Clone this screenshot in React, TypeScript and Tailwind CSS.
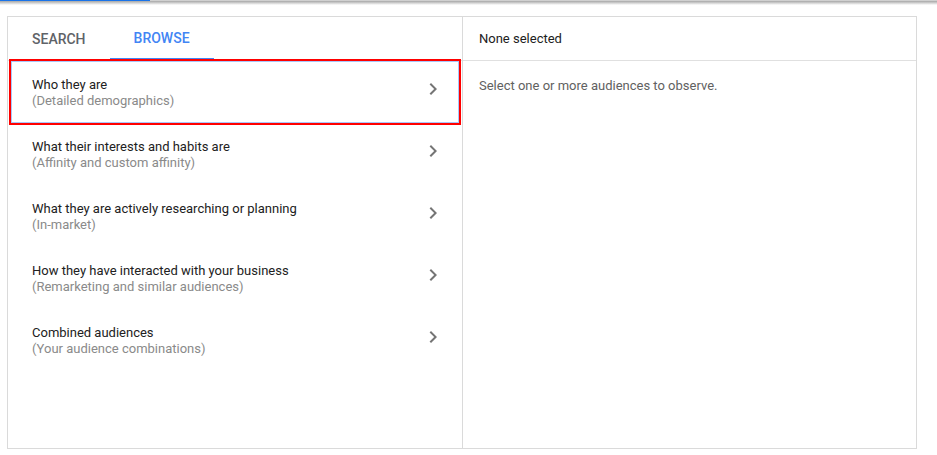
const categories = [
  { title: "Who they are", sub: "(Detailed demographics)", selected: true },
  { title: "What their interests and habits are", sub: "(Affinity and custom affinity)" },
  { title: "What they are actively researching or planning", sub: "(In-market)" },
  { title: "How they have interacted with your business", sub: "(Remarketing and similar audiences)" },
  { title: "Combined audiences", sub: "(Your audience combinations)" },
];

const Chevron = () => (
  <svg width="24" height="24" viewBox="0 0 24 24" className="mb-[6px] shrink-0">
    <path d="M10 6L8.59 7.41 13.17 12l-4.58 4.59L10 18l6-6z" fill="#757575" />
  </svg>
);

const App = () => {
  return (
    <div className="w-[937px] h-[455px] bg-white font-['Roboto',sans-serif] overflow-hidden">
      {/* top progress strip */}
      <div className="flex h-[1px]">
        <div className="w-[150px] bg-[#1a73e8]" />
        <div className="flex-1 bg-[#d0d0d0]" />
      </div>
      <div className="h-[4px] bg-linear-to-b from-[#a6a6a6] to-white" />

      <div className="ml-[7px] mt-[11px] w-[910px] h-[433px] border border-[#dadada] flex">
        {/* left panel */}
        <div className="w-[455px] border-r border-[#dadada] flex flex-col">
          <div className="h-[44px] border-b border-[#e0e0e0] flex text-[14px] font-medium uppercase">
            <div className="px-6 pt-[2px] flex items-center text-[#5f6368]">Search</div>
            <div className="px-6 pt-[2px] flex items-center text-[#4285f4] border-b-2 border-[#4285f4]">
              Browse
            </div>
          </div>
          {categories.map((c) => (
            <div
              key={c.title}
              className={`${
                c.selected
                  ? "relative z-10 border-[#a8c7fa] outline-2 outline-[#ff0000]"
                  : "border-transparent"
              } mx-[3px] h-[62px] border flex items-center justify-between pl-[20px] pr-[13px] cursor-pointer`}
            >
              <div className="pt-[2px] text-[13px] leading-[16px]">
                <div className="text-[#212121]">{c.title}</div>
                <div className="text-[#8a8a8a]">{c.sub}</div>
              </div>
              <Chevron />
            </div>
          ))}
        </div>

        {/* right panel */}
        <div className="flex-1 flex flex-col">
          <div className="h-[44px] border-b border-[#e0e0e0] flex items-center pl-4 text-[13px] text-[#212121]">
            None selected
          </div>
          <div className="pl-4 pt-[17px] text-[13px] leading-[16px] text-[#616161]">
            Select one or more audiences to observe.
          </div>
        </div>
      </div>
    </div>
  );
};

export default App;
